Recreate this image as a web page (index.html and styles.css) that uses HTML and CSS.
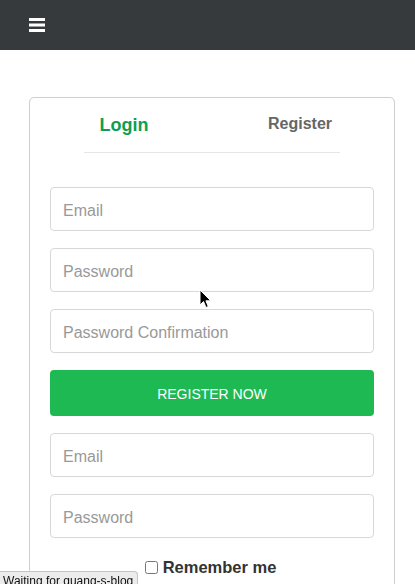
FILE: index.html
```html
<!DOCTYPE html>
<html>
<head>
<meta charset="utf-8">
<link rel="stylesheet" href="styles.css">
</head>
<body>
<nav class="navbar">
  <svg class="burger" width="16" height="14" viewBox="0 0 16 14">
    <rect x="0" y="0" width="16" height="3" fill="#fff"/>
    <rect x="0" y="5.5" width="16" height="3" fill="#fff"/>
    <rect x="0" y="11" width="16" height="3" fill="#fff"/>
  </svg>
</nav>
<main class="page">
  <section class="card">
    <div class="tabs">
      <div class="tab tab-active">Login</div>
      <div class="tab">Register</div>
    </div>
    <div class="divider"></div>
    <form class="form">
      <input class="field" type="text" placeholder="Email">
      <input class="field" type="password" placeholder="Password">
      <input class="field" type="password" placeholder="Password Confirmation">
      <button class="btn" type="button">REGISTER NOW</button>
      <input class="field" type="text" placeholder="Email">
      <input class="field" type="password" placeholder="Password">
      <label class="remember"><input class="check" type="checkbox"> Remember me</label>
    </form>
  </section>
</main>
<svg class="cursor" width="13" height="20" viewBox="0 0 13 20">
  <path d="M1 1 L1 16 L4.5 12.5 L7 18.5 L9.3 17.5 L6.9 11.8 L11.8 11.8 Z" fill="#000" stroke="#fff" stroke-width="1"/>
</svg>
<div class="status">Waiting for quang-s-blog h</div>
</body>
</html>
```
FILE: styles.css
```css
html, body {
  margin: 0;
  padding: 0;
  background: #fff;
  font-family: "Liberation Sans", Arial, sans-serif;
  overflow: hidden;
}
.navbar {
  height: 50px;
  background: #373a3c;
  display: flex;
  align-items: center;
  padding-left: 29px;
}
.burger {
  display: block;
  margin-top: -1px;
}
.page {
  margin: 47px 20px 0 29px;
}
.card {
  border: 1px solid #cfcfcf;
  border-radius: 5px;
  padding: 0 20px 20px;
  box-shadow: 0 0 1px rgba(0,0,0,0.05);
}
.tabs {
  display: grid;
  grid-template-columns: 1fr 1fr;
  margin: 0 -14px;
  height: 54px;
  align-items: center;
}
.tab {
  text-align: center;
  font-weight: bold;
  font-size: 16px;
  color: #666;
  padding-bottom: 3px;
}
.tab-active {
  font-size: 18px;
  color: #0e9e52;
  padding-bottom: 0;
}
.divider {
  width: 256px;
  height: 1px;
  background: #e6e6e6;
  margin: 0 auto;
}
.form {
  margin-top: 34px;
}
.field {
  display: block;
  box-sizing: border-box;
  width: 100%;
  height: 44px;
  margin: 0 0 17px;
  padding: 3px 12px 0;
  border: 1px solid #d8d8d8;
  border-radius: 4px;
  font-family: "Liberation Sans", Arial, sans-serif;
  font-size: 16px;
  color: #333;
  outline: none;
}
.field::placeholder {
  color: #999;
}
.btn {
  display: block;
  width: 100%;
  height: 46px;
  margin: 0 0 17px;
  padding-top: 2px;
  border: none;
  border-radius: 4px;
  background: #1eb953;
  color: #fff;
  font-family: "Liberation Sans", Arial, sans-serif;
  font-size: 14px;
}
.remember {
  display: flex;
  justify-content: center;
  align-items: center;
  gap: 5px;
  margin-top: 20px;
  padding-right: 3px;
  font-weight: bold;
  font-size: 16.5px;
  color: #333;
}
.check {
  width: 13px;
  height: 13px;
  margin: 0;
}
.cursor {
  position: absolute;
  left: 199px;
  top: 289px;
}
.status {
  position: fixed;
  left: 0;
  bottom: -6px;
  width: 134px;
  height: 16px;
  padding: 2px 0 0 3px;
  background: #ececec;
  border: 1px solid #c4c4c4;
  border-left: none;
  border-bottom: none;
  border-top-right-radius: 4px;
  font-size: 12px;
  color: #111;
  white-space: nowrap;
  overflow: hidden;
}
```
